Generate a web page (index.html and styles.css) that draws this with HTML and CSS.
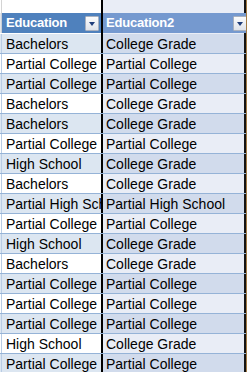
FILE: index.html
```html
<!DOCTYPE html>
<html>
<head>
<meta charset="utf-8">
<link rel="stylesheet" href="styles.css">
</head>
<body>
<div class="sheet">
  <div class="row top"><div class="c0"></div><div class="c1"></div><div class="c2"></div></div>
  <div class="row head">
    <div class="c0"><span class="stub"></span></div>
    <div class="c1"><span class="hd">Education</span><span class="btn"><span class="tri"></span></span></div>
    <div class="c2"><span class="hd">Education2</span><span class="btn"><span class="tri"></span></span></div>
  </div>
  <div class="row gap"><div class="c0"></div><div class="c1"></div><div class="c2"></div></div>
  <div class="row band"><div class="c0"></div><div class="c1">Bachelors</div><div class="c2">College Grade</div></div>
  <div class="row"><div class="c0"></div><div class="c1">Partial College</div><div class="c2">Partial College</div></div>
  <div class="row band"><div class="c0"></div><div class="c1">Partial College</div><div class="c2">Partial College</div></div>
  <div class="row"><div class="c0"></div><div class="c1">Bachelors</div><div class="c2">College Grade</div></div>
  <div class="row band"><div class="c0"></div><div class="c1">Bachelors</div><div class="c2">College Grade</div></div>
  <div class="row"><div class="c0"></div><div class="c1">Partial College</div><div class="c2">Partial College</div></div>
  <div class="row band"><div class="c0"></div><div class="c1">High School</div><div class="c2">College Grade</div></div>
  <div class="row"><div class="c0"></div><div class="c1">Bachelors</div><div class="c2">College Grade</div></div>
  <div class="row band"><div class="c0"></div><div class="c1">Partial High School</div><div class="c2">Partial High School</div></div>
  <div class="row"><div class="c0"></div><div class="c1">Partial College</div><div class="c2">Partial College</div></div>
  <div class="row band"><div class="c0"></div><div class="c1">High School</div><div class="c2">College Grade</div></div>
  <div class="row"><div class="c0"></div><div class="c1">Bachelors</div><div class="c2">College Grade</div></div>
  <div class="row band"><div class="c0"></div><div class="c1">Partial College</div><div class="c2">Partial College</div></div>
  <div class="row"><div class="c0"></div><div class="c1">Partial College</div><div class="c2">Partial College</div></div>
  <div class="row band"><div class="c0"></div><div class="c1">Partial College</div><div class="c2">Partial College</div></div>
  <div class="row"><div class="c0"></div><div class="c1">High School</div><div class="c2">College Grade</div></div>
  <div class="row band"><div class="c0"></div><div class="c1">Partial College</div><div class="c2">Partial College</div></div>
  <div class="row"><div class="c0"></div><div class="c1">Bachelors</div><div class="c2">College Grade</div></div>
</div>
</body>
</html>
```
FILE: styles.css
```css
html, body {
  margin: 0;
  padding: 0;
  background: #ffffff;
  overflow: hidden;
}
.sheet {
  width: 246px;
  height: 372px;
  overflow: hidden;
  border-right: 1px solid #a27b45;
  font-family: "Liberation Sans", Arial, sans-serif;
  font-size: 14px;
  color: #000;
}
.row {
  display: flex;
  height: 19px;
  border-bottom: 1px solid #95b3d7;
  line-height: 21px;
}
.c0 {
  width: 1px;
  border-right: 1px solid #b9cce4;
  flex: none;
}
.c1 {
  width: 95px;
  padding-left: 4px;
  flex: none;
  white-space: nowrap;
  overflow: hidden;
  background: #ffffff;
}
.c2 {
  width: 138px;
  padding-left: 3px;
  flex: none;
  white-space: nowrap;
  overflow: hidden;
  border-left: 2px solid #000;
  border-right: 2px solid #141414;
  background: #e9edf6;
}
.band .c1 { background: #dce6f1; }
.band .c2 { background: #d1dbec; }
.band .c0 { background: #dce6f1; }

.top {
  height: 13px;
  border-bottom: none;
}
.top .c0 { border-right-color: #d4d4d4; }
.gap {
  height: 1px;
  border-bottom: none;
}
.gap .c0 { border-right-color: #ffffff; }
.head {
  height: 20px;
  line-height: 20px;
  border-bottom: none;
}
.head .c0 {
  border-right: 1px solid #c9ced6;
  background: #e3e6ea;
}
.head .c1 {
  background: #4f81bd;
  display: flex;
  align-items: center;
  justify-content: space-between;
  padding-right: 2px;
  width: 93px;
}
.head .c2 {
  background: #7599cf;
  display: flex;
  align-items: center;
  justify-content: space-between;
  width: 141px;
  padding-right: 0;
}
.hd {
  color: #fff;
  font-weight: bold;
  font-size: 13px;
  letter-spacing: -0.2px;
}
.btn {
  width: 12px;
  height: 13px;
  border: 1px solid #a9b1bf;
  border-radius: 1px;
  background: linear-gradient(#fbfcfd, #dfe3ea);
  display: flex;
  align-items: center;
  justify-content: center;
}
.tri {
  width: 0;
  height: 0;
  border-left: 3.5px solid transparent;
  border-right: 3.5px solid transparent;
  border-top: 4px solid #1f3d7a;
  margin-top: 1px;
}
```
